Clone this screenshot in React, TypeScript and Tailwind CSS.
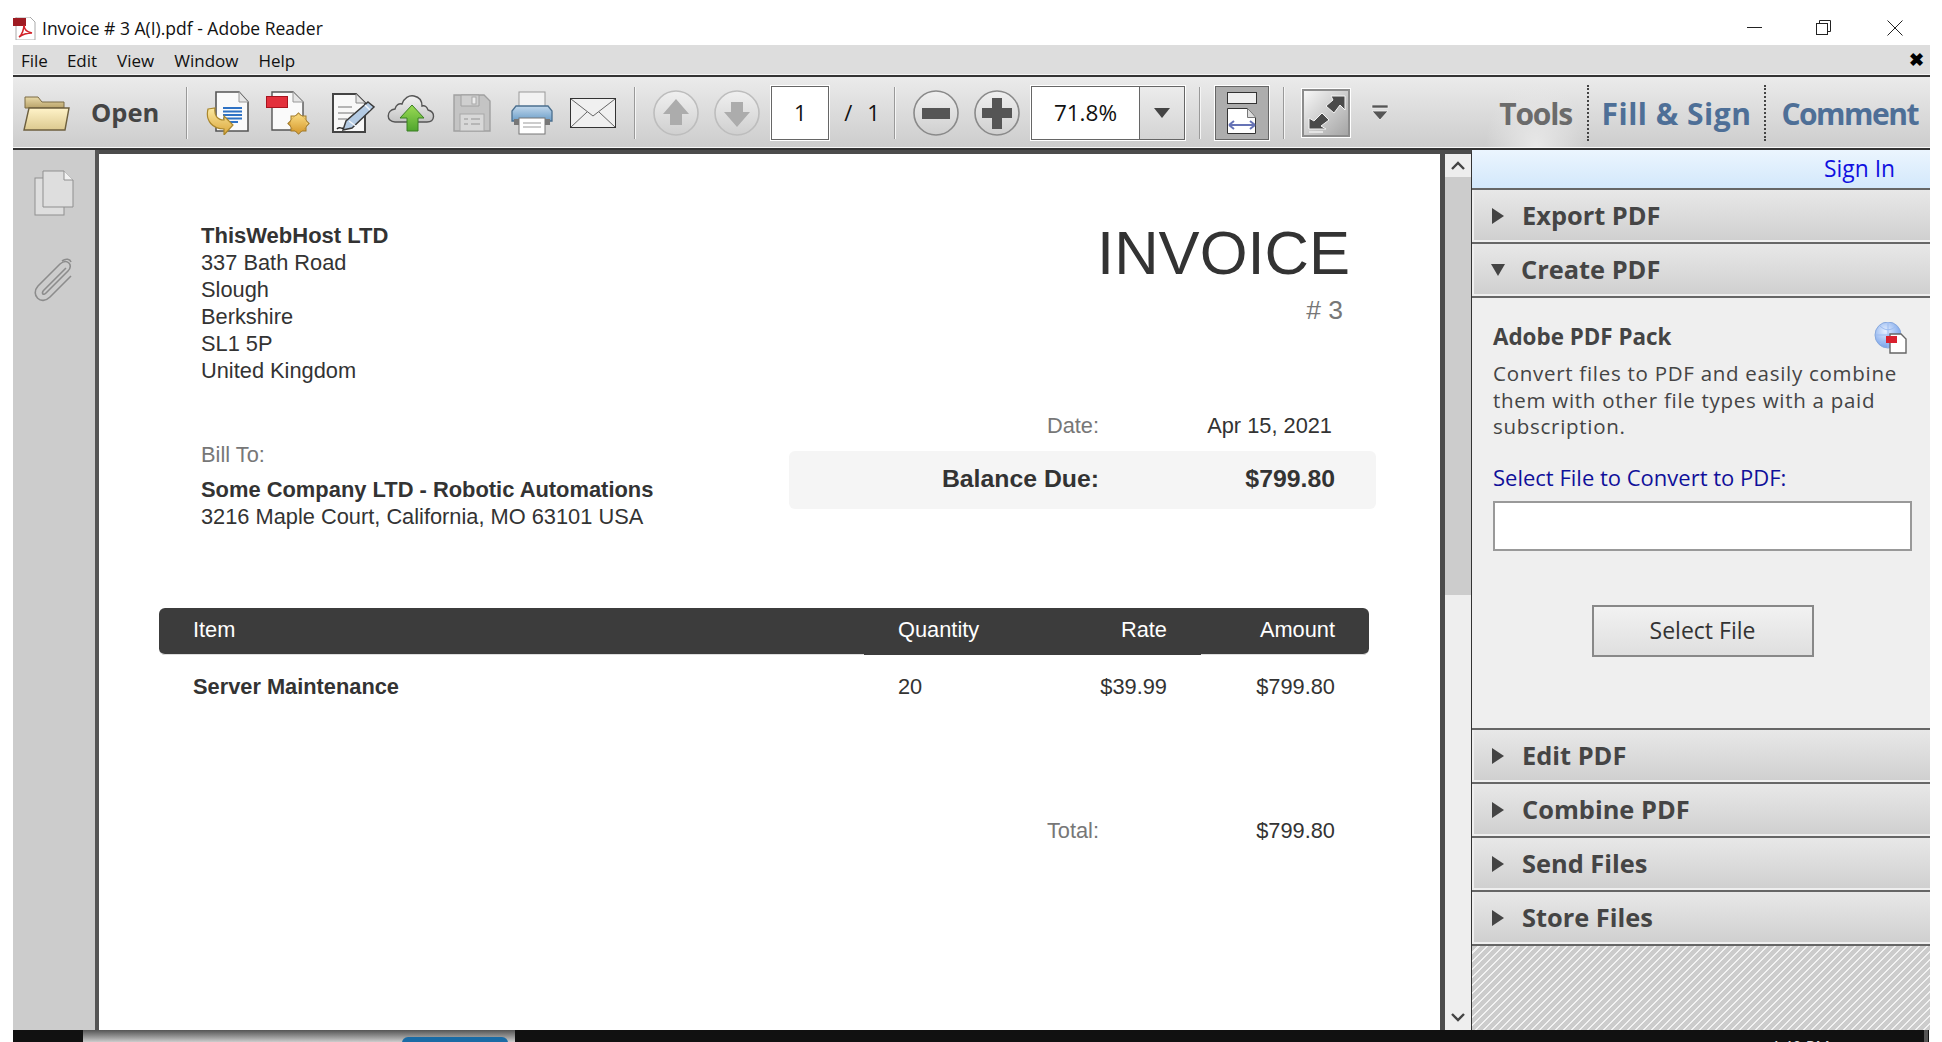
import React from "react";

const ui = "font-['Open_Sans','Noto_Sans',sans-serif]";
const doc = "font-['Liberation_Sans',Arial,sans-serif]";

function Sep({ cls = "" }: { cls?: string }) {
  return <div className={`w-[1px] h-[52px] bg-[#999] border-r border-[#f5f5f5] box-content ${cls}`} />;
}

function Folder() {
  return (
    <svg width="47" height="38" viewBox="0 0 47 38" className="ml-[10px]">
      <defs>
        <linearGradient id="fb" x1="0" y1="0" x2="0" y2="1"><stop offset="0" stopColor="#e8d9a8" /><stop offset="1" stopColor="#b9a36a" /></linearGradient>
        <linearGradient id="ff" x1="0" y1="0" x2="0" y2="1"><stop offset="0" stopColor="#fff3c9" /><stop offset="1" stopColor="#dcc98f" /></linearGradient>
      </defs>
      <path d="M2 3h13l4 5h22v6H2z" fill="url(#fb)" stroke="#7b6b45" />
      <path d="M6 14h40l-4 22H1z" fill="url(#ff)" stroke="#6d5f3e" strokeWidth="1.4" />
    </svg>
  );
}

function DocArrow() {
  return (
    <svg width="44" height="44" viewBox="0 0 44 44">
      <defs><linearGradient id="ya" x1="0" y1="0" x2="0" y2="1"><stop offset="0" stopColor="#fbe9a0" /><stop offset="1" stopColor="#dba63a" /></linearGradient></defs>
      <path d="M11 1h23l9 10v29H11z" fill="#fafafa" stroke="#555" strokeWidth="1.6" />
      <path d="M34 1v10h9" fill="#e6e6e6" stroke="#999" />
      <path d="M18 17h19M18 20.5h19M18 24h19M18 27.5h19M18 31h15" stroke="#2f72c4" strokeWidth="1.8" />
      <path d="M3 18l7-1c-1 7 2 12 9 12v-4l9 9-9 10v-6C8 38 0 30 3 18z" fill="url(#ya)" stroke="#a9862c" strokeWidth="1.2" />
    </svg>
  );
}

function RedDoc() {
  return (
    <svg width="44" height="44" viewBox="0 0 44 44">
      <defs><linearGradient id="gb" x1="0" y1="0" x2="0" y2="1"><stop offset="0" stopColor="#f7d67a" /><stop offset="1" stopColor="#d99f35" /></linearGradient></defs>
      <path d="M6 1h21l10 10v28H6z" fill="#fafafa" stroke="#555" strokeWidth="1.4" />
      <path d="M27 1v10h10" fill="#e6e6e6" stroke="#999" />
      <rect x="0.5" y="5.5" width="21" height="11" fill="#e3303c" stroke="#a8141f" />
      <g transform="translate(32.5 32.5)">
        <rect x="-7.5" y="-7.5" width="15" height="15" fill="url(#gb)" stroke="#a07a2a" />
        <rect x="-7.5" y="-7.5" width="15" height="15" fill="url(#gb)" stroke="#a07a2a" transform="rotate(45)" />
        <circle r="8" fill="url(#gb)" />
      </g>
    </svg>
  );
}

function EditDoc() {
  return (
    <svg width="43" height="40" viewBox="0 0 43 40">
      <path d="M1 1h23l9 9v29H1z" fill="#f8f8f8" stroke="#444" strokeWidth="2" />
      <path d="M24 1v9h9" fill="#e6e6e6" stroke="#888" />
      <path d="M6 14h14M6 20h16M6 26h9" stroke="#b5b5b5" strokeWidth="1.8" />
      <path d="M36 9l6 5-22 21-9 2 3-9z" fill="#b4cbe4" stroke="#3a3a3a" strokeWidth="1.5" />
      <path d="M17 28l8 6M33 12l5 5" stroke="#f2f6fb" strokeWidth="1.5" />
      <path d="M5 36c2-3 4 0 6-1" stroke="#222" strokeWidth="1.4" fill="none" />
    </svg>
  );
}

function Cloud() {
  return (
    <svg width="48" height="38" viewBox="0 0 48 38">
      <defs>
        <linearGradient id="gr" x1="0" y1="0" x2="0" y2="1"><stop offset="0" stopColor="#9bdb55" /><stop offset="1" stopColor="#4fa52d" /></linearGradient>
        <linearGradient id="cl" x1="0" y1="0" x2="0" y2="1"><stop offset="0" stopColor="#f2f2f2" /><stop offset="1" stopColor="#c4c4c4" /></linearGradient>
      </defs>
      <path d="M8 28c-9 0-9-12 0-13 1-4 4-6 7-5 2-6 7-9 12-8 5 1 8 5 8 10 3-1 5 1 6 4 8 2 7 12-1 12z" fill="url(#cl)" stroke="#555" strokeWidth="1.4" />
      <path d="M25 11l12 13h-6v13H20V24h-7z" fill="url(#gr)" stroke="#3a7f24" />
    </svg>
  );
}

function Floppy() {
  return (
    <svg width="38" height="38" viewBox="0 0 38 38">
      <path d="M1 1h30l6 6v30H1z" fill="#c4c4c4" stroke="#a0a0a0" strokeWidth="1.4" />
      <path d="M8 1h18v11H8z" fill="#cfcfcf" stroke="#a0a0a0" />
      <rect x="19" y="3" width="4" height="7" fill="#ececec" stroke="#a8a8a8" />
      <rect x="7" y="20" width="24" height="17" fill="#d8d8d8" stroke="#a8a8a8" />
      <path d="M11 25h4M18 25h9M11 30h4M18 30h9" stroke="#aaa" strokeWidth="1.6" />
    </svg>
  );
}

function Printer() {
  return (
    <svg width="42" height="44" viewBox="0 0 42 44">
      <defs><linearGradient id="pb" x1="0" y1="0" x2="0" y2="1"><stop offset="0" stopColor="#c2d8ec" /><stop offset="1" stopColor="#6a9dc8" /></linearGradient></defs>
      <rect x="8" y="1" width="26" height="17" fill="#f2f2f2" stroke="#999" />
      <path d="M5 15h32l4 5v10H1V20z" fill="url(#pb)" stroke="#4b6f8e" strokeWidth="1.3" />
      <rect x="3" y="28" width="36" height="6" fill="#777" />
      <rect x="8" y="27" width="26" height="16" fill="#fff" stroke="#777" />
      <path d="M12 32h18M12 36h18" stroke="#999" />
    </svg>
  );
}

function Envelope() {
  return (
    <svg width="46" height="30" viewBox="0 0 46 30">
      <rect x="0.5" y="0.5" width="45" height="29" fill="#f0f0f0" stroke="#333" />
      <path d="M1 1l22 17L45 1M1 29l16-15M45 29L29 14" fill="none" stroke="#666" />
    </svg>
  );
}

function RoundBtn({ kind }: { kind: "up" | "down" | "minus" | "plus" }) {
  const on = kind === "minus" || kind === "plus";
  const c = on ? "#555" : "#acacac";
  return (
    <svg width="46" height="46" viewBox="0 0 46 46">
      <defs><linearGradient id={"rb" + kind} x1="0" y1="0" x2="0" y2="1"><stop offset="0" stopColor="#f0f0f0" /><stop offset="1" stopColor="#cfcfcf" /></linearGradient></defs>
      <circle cx="23" cy="23" r="22" fill={`url(#rb${kind})`} stroke={on ? "#8a8a8a" : "#bdbdbd"} strokeWidth="1.6" />
      {kind === "up" && <path d="M23 9l13 15h-7v11H17V24h-7z" fill={c} />}
      {kind === "down" && <path d="M23 37L10 22h7V12h12v10h7z" fill={c} />}
      {kind === "minus" && <rect x="9" y="18" width="28" height="11" fill={c} />}
      {kind === "plus" && <path d="M18 8h10v10h10v10H28v11H18V28H8V18h10z" fill={c} />}
    </svg>
  );
}

function Head({ label, open }: { label: string; open?: boolean }) {
  return (
    <div className="border-t-2 border-[#666] h-[54px] pl-[2px] bg-[#efefef] shrink-0">
      <div className="h-[50px] pt-[2px] bg-gradient-to-b from-[#e8e8e8] to-[#d0d0d0] flex items-center">
        {open ? (
          <svg width="14" height="12" viewBox="0 0 14 12" className="ml-[17px] mr-[16px]"><path d="M0 0h14L7 12z" fill="#444" /></svg>
        ) : (
          <svg width="12" height="16" viewBox="0 0 12 16" className="ml-[18px] mr-[18px]"><path d="M0 0l12 8-12 8z" fill="#444" /></svg>
        )}
        <span className={`${ui} font-bold text-[25.4px] leading-none text-[#454545]`}>{label}</span>
      </div>
    </div>
  );
}

export default function App() {
  return (
    <div className={`w-[1942px] h-[1042px] bg-white flex flex-col overflow-hidden ${doc}`}>
      {/* title bar */}
      <div className="h-[45px] flex items-center pl-[13px] relative shrink-0">
        <div className="flex items-center pt-[12px]">
          <svg width="23" height="23" viewBox="0 0 23 23">
            <path d="M3 0h14l5 5v18H3z" fill="#fff" stroke="#aaa" />
            <rect x="0" y="1" width="13" height="8" fill="#9e1b22" />
            <path d="M6 20c3-2 5-8 5-12 0 4 3 7 8 8-4 0-9 1-13 4z" fill="none" stroke="#d2232a" strokeWidth="1.6" />
          </svg>
          <span className={`${ui} text-[17.5px] ml-[6px] text-[#111]`}>Invoice # 3 A(I).pdf - Adobe Reader</span>
        </div>
        <div className="ml-auto flex items-center pr-[39px] pt-[10px]">
          <div className="w-[15px] h-[1px] bg-[#222]" />
          <svg width="15" height="15" viewBox="0 0 15 15" fill="none" stroke="#222" className="ml-[54px]"><rect x="0.5" y="3.5" width="11" height="11" /><path d="M3.5 3.5v-3h11v11h-3" /></svg>
          <svg width="16" height="16" viewBox="0 0 16 16" fill="none" stroke="#222" className="ml-[56px]"><path d="M0.5 0.5l15 15M15.5 0.5l-15 15" /></svg>
        </div>
      </div>

      <div className="flex-1 ml-[13px] w-[1917px] flex flex-col min-h-0">
        {/* menu */}
        <div className="h-[30px] bg-[#dddddd] border-b border-[#f4f4f4] flex items-center pl-[8px] shrink-0 text-[#111]">
          <div className={`${ui} text-[17px] flex gap-[20px] pt-[2px]`}>
            <span>File</span><span className="-ml-[1px]">Edit</span><span>View</span><span>Window</span><span>Help</span>
          </div>
          <span className="ml-auto mr-[6px] text-[18px] font-bold leading-none text-black">✖</span>
        </div>
        <div className="h-[2px] bg-[#333] shrink-0" />

        {/* toolbar */}
        <div className="h-[71px] pt-[1px] bg-gradient-to-b from-[#ebebeb] to-[#cdcdcd] border-b border-[#f7f7f7] flex items-center shrink-0 relative">
          <Folder />
          <span className={`${ui} font-bold text-[25.5px] text-[#444] ml-[21px] mr-[27px] leading-none`}>Open</span>
          <Sep />
          <div className="ml-[17px]"><DocArrow /></div>
          <div className="ml-[17px]"><RedDoc /></div>
          <div className="ml-[22px]"><EditDoc /></div>
          <div className="ml-[12px]"><Cloud /></div>
          <div className="ml-[18px]"><Floppy /></div>
          <div className="ml-[20px]"><Printer /></div>
          <div className="ml-[17px]"><Envelope /></div>
          <Sep cls="ml-[18px]" />
          <div className="ml-[17px]"><RoundBtn kind="up" /></div>
          <div className="ml-[15px]"><RoundBtn kind="down" /></div>
          <div className="ml-[11px] w-[58px] h-[54px] bg-white border border-[#666] outline outline-1 outline-white flex items-center justify-center">
            <span className={`${ui} text-[22px] text-[#111]`}>1</span>
          </div>
          <span className={`${ui} text-[22px] ml-[15px] text-[#111]`}>/</span>
          <span className={`${ui} text-[22px] ml-[15px] text-[#111]`}>1</span>
          <Sep cls="ml-[14px]" />
          <div className="ml-[17px]"><RoundBtn kind="minus" /></div>
          <div className="ml-[15px]"><RoundBtn kind="plus" /></div>
          <div className="ml-[11px] w-[154px] h-[54px] bg-white border border-[#666] outline outline-1 outline-white flex">
            <div className={`${ui} w-[107px] flex items-center justify-center text-[22.5px] text-[#111]`}>71.8%</div>
            <div className="flex-1 border-l border-[#666] bg-gradient-to-b from-[#ececec] to-[#d4d4d4] flex items-center justify-center">
              <svg width="16" height="10" viewBox="0 0 16 10"><path d="M0 0h16L8 10z" fill="#444" /></svg>
            </div>
          </div>
          <Sep cls="ml-[14px]" />
          <div className="ml-[14px] w-[54px] h-[54px] bg-[#adadad] border border-[#666] outline outline-1 outline-white flex items-center justify-center">
            <svg width="32" height="44" viewBox="0 0 32 44">
              <rect x="1.5" y="1.5" width="29" height="11" fill="#efefef" stroke="#333" />
              <path d="M1.5 17.5h20l8 9v16h-28z" fill="#fff" stroke="#333" />
              <path d="M21.5 17.5v9h8" fill="#ddd" stroke="#777" />
              <path d="M3 34h26M3 34l5-4M3 34l5 4M29 34l-5-4M29 34l-5 4" stroke="#6673b5" strokeWidth="2" fill="none" />
            </svg>
          </div>
          <Sep cls="ml-[14px]" />
          <div className="ml-[17px] w-[48px] h-[48px] bg-gradient-to-br from-[#f7f7f7] to-[#a5a5a5] border-2 border-[#8c8c8c] outline outline-1 outline-white flex items-center justify-center">
            <svg width="44" height="44" viewBox="0 0 44 44">
              <path d="M27 5h14v14l-5-5-6 8-8-7 7-6z" fill="#4a4a4a" stroke="#f4f4f4" />
              <path d="M5 27l5 3 8-8 7 7-8 6 5 3H5z" fill="#4a4a4a" stroke="#f4f4f4" />
              <rect x="5" y="40" width="14" height="2" fill="#e4e4e4" />
            </svg>
          </div>
          <svg width="18" height="16" viewBox="0 0 18 16" className="ml-[21px]">
            <rect x="1" y="0" width="16" height="3" fill="#555" stroke="#f4f4f4" strokeWidth="0.6" />
            <path d="M1 6h16l-8 9z" fill="#555" stroke="#f4f4f4" strokeWidth="0.8" />
          </svg>
          <div className="ml-auto h-full flex items-center">
            <div className="w-[102px] h-full bg-[radial-gradient(ellipse_at_50%_100%,#e8e8e8,transparent_70%)] flex items-center justify-center">
              <span className={`${ui} font-bold text-[30px] text-[#6b6b6b] leading-none tracking-[-1.2px] pt-[3px]`}>Tools</span>
            </div>
            <div className="w-0 h-[56px] border-l-2 border-dotted border-[#444]" />
            <span className={`${ui} font-bold text-[30px] text-[#4e6f97] leading-none tracking-[0.5px] ml-[13px] mr-[13px] pt-[3px]`}>Fill &amp; Sign</span>
            <div className="w-0 h-[56px] border-l-2 border-dotted border-[#444]" />
            <span className={`${ui} font-bold text-[30px] text-[#4e6f97] leading-none tracking-[-1.5px] ml-[15px] mr-[12px] pt-[3px]`}>Comment</span>
          </div>
        </div>

        {/* body */}
        <div className="flex-1 min-h-0 border-t-2 border-[#333] flex">
          <div className="w-[82px] shrink-0 bg-[#cccccc] flex flex-col items-center pt-[20px]">
            <svg width="40" height="46" viewBox="0 0 40 46" fill="#dedede" stroke="#8f8f8f">
              <rect x="1" y="8" width="29" height="37" />
              <path d="M9 1h21l9 9v27H9z" />
              <path d="M30 1v9h9" fill="#f2f2f2" />
            </svg>
            <svg width="42" height="46" viewBox="0 0 42 46" fill="none" stroke="#8c8c8c" strokeWidth="1.6" className="mt-[41px]">
              <path d="M33 11L11 33c-3 3-1 6 2 3l22-22c6-6-1-13-8-7L5 29c-8 9 3 20 12 11l21-21" />
              <path d="M38 5c-1-3-5-4-9-1" />
            </svg>
          </div>
          <div className="w-[4px] bg-[#555] shrink-0" />

          {/* page */}
          <div className="w-[1341px] shrink-0 bg-white border-t-4 border-[#4c4c4c] text-[21.8px] leading-[27px] text-[#333]">
            <div className="flex justify-between pl-[102px] pr-[90px] pt-[68px]">
              <div>
                <div className="font-bold text-[22px]">ThisWebHost LTD</div>
                <div>337 Bath Road</div>
                <div>Slough</div>
                <div>Berkshire</div>
                <div>SL1 5P</div>
                <div>United Kingdom</div>
              </div>
              <div className="text-right -mt-[2px]">
                <div className="text-[61.5px] leading-[66px] text-[#333]">INVOICE</div>
                <div className="text-[26.5px] leading-[30px] text-[#777] pr-[7px] mt-[9px]">#&nbsp;3</div>
              </div>
            </div>

            <div className="flex mt-[28px] h-[118px]">
              <div className="w-[690px] pl-[102px] pt-[29px]">
                <div className="text-[#777]">Bill To:</div>
                <div className="font-bold text-[21.9px] mt-[8px]">Some Company LTD - Robotic Automations</div>
                <div>3216 Maple Court, California, MO 63101 USA</div>
              </div>
              <div className="w-[587px]">
                <div className="flex h-[27px]">
                  <div className="w-[310px] text-right text-[#777]">Date:</div>
                  <div className="w-[233px] text-right">Apr 15, 2021</div>
                </div>
                <div className="mt-[12px] h-[58px] pb-[3px] bg-[#f5f5f5] rounded-[6px] flex items-center text-[24.8px] font-bold">
                  <div className="w-[310px] text-right">Balance Due:</div>
                  <div className="w-[236px] text-right">$799.80</div>
                </div>
              </div>
            </div>

            <div className="ml-[60px] w-[1210px] mt-[78px]">
              <div className="relative h-[47px] pb-[3px] bg-[#3c3c3c] rounded-[6px] border-b border-[#ddd] text-white grid grid-cols-[739px_150px_119px_168px] items-center">
                <div className="pl-[34px]">Item</div>
                <div>Quantity</div>
                <div className="text-right">Rate</div>
                <div className="text-right">Amount</div>
                <div className="absolute left-[705px] w-[337px] -bottom-[1px] h-[2px] bg-[#3c3c3c]" />
              </div>
              <div className="grid grid-cols-[739px_150px_119px_168px] mt-[18px]">
                <div className="pl-[34px] font-bold">Server Maintenance</div>
                <div>20</div>
                <div className="text-right">$39.99</div>
                <div className="text-right">$799.80</div>
              </div>
              <div className="grid grid-cols-[940px_68px_168px] mt-[117px]">
                <div className="text-right text-[#777]">Total:</div>
                <div />
                <div className="text-right">$799.80</div>
              </div>
            </div>
          </div>
          <div className="w-[5px] bg-[#4c4c4c] shrink-0" />

          {/* scrollbar */}
          <div className="w-[27px] shrink-0 bg-[#eeeeee] flex flex-col items-center border-r border-[#333] border-t-4 border-t-[#4c4c4c]">
            <svg width="14" height="9" viewBox="0 0 14 9" className="mt-[7px]" fill="none" stroke="#444" strokeWidth="2.4"><path d="M1 8l6-6 6 6" /></svg>
            <div className="w-full h-[418px] bg-[#cccccc] mt-[7px]" />
            <svg width="14" height="9" viewBox="0 0 14 9" className="mt-auto mb-[8px]" fill="none" stroke="#444" strokeWidth="2.4"><path d="M1 1l6 6 6-6" /></svg>
          </div>

          {/* side panel */}
          <div className="flex-1 flex flex-col bg-[#efefef] min-w-0">
            <div className="h-[38px] bg-gradient-to-b from-[#ebf5fe] to-[#d3e8fb] flex items-center justify-end pr-[35px] shrink-0">
              <span className={`${ui} text-[22.8px] text-[#1010e0] leading-none`}>Sign In</span>
            </div>
            <Head label="Export PDF" />
            <Head label="Create PDF" open />
            <div className="border-t-2 border-[#666] h-[432px] pl-[21px] pr-[17px] shrink-0 relative">
              <div className="flex items-center justify-between pt-[25px]">
                <span className={`${ui} font-bold text-[22.4px] leading-[28px] text-[#444]`}>Adobe PDF Pack</span>
                <svg width="33" height="32" viewBox="0 0 33 32" className="absolute left-[402px] top-[24px]">
                  <defs><radialGradient id="gl" cx="0.4" cy="0.35" r="0.7"><stop offset="0" stopColor="#e6f0ff" /><stop offset="1" stopColor="#6d9be8" /></radialGradient></defs>
                  <circle cx="14" cy="13" r="13" fill="url(#gl)" stroke="#88a8dc" />
                  <path d="M2 13h24M14 0v26M6 4c5 5 11 5 16 0M6 22c5-5 11-5 16 0" stroke="#9dbcf0" fill="none" />
                  <path d="M16 12h11l5 5v14H16z" fill="#fff" stroke="#666" strokeWidth="1.4" />
                  <rect x="12" y="14" width="11" height="7" fill="#d9202e" />
                </svg>
              </div>
              <p className={`${ui} text-[20.5px] leading-[26.5px] text-[#444] tracking-[0.72px] mt-[9px] whitespace-nowrap`}>
                Convert files to PDF and easily combine<br />them with other file types with a paid<br />subscription.
              </p>
              <div className={`${ui} text-[22px] leading-[26px] text-[#10109a] mt-[24px]`}>Select File to Convert to PDF:</div>
              <div className="mt-[11px] h-[50px] w-[419px] bg-white border-2 border-[#999]" />
              <div className="flex justify-center mt-[54px] w-[419px]">
                <div className={`${ui} w-[222px] h-[52px] border-2 border-[#888] bg-gradient-to-b from-[#f2f2f2] to-[#dfdfdf] flex items-center justify-center text-[23px] text-[#333]`}>Select File</div>
              </div>
            </div>
            <Head label="Edit PDF" />
            <Head label="Combine PDF" />
            <Head label="Send Files" />
            <Head label="Store Files" />
            <div className="flex-1 border-t-2 border-[#666] bg-[repeating-linear-gradient(135deg,#cccccc_0,#cccccc_4.24px,#f2f2f2_4.24px,#f2f2f2_5.66px)]" />
          </div>
        </div>
      </div>

      {/* taskbar peeking at the bottom */}
      <div className="h-[12px] ml-[13px] w-[1916px] bg-[#111] shrink-0 flex overflow-hidden">
        <div className="ml-[70px] w-[432px] h-full bg-gradient-to-b from-[#555] to-[#ccc] pl-[319px] pt-[7px]">
          <div className="w-[106px] h-[12px] rounded-t-[6px] bg-[#1a6ba5]" />
        </div>
        <span className={`${ui} ml-[1255px] text-[16px] leading-[20px] pt-[7px] text-[#ddd] whitespace-nowrap`}>4:40 PM</span>
        <div className="ml-auto mr-[1px] w-[4px] h-full bg-[#555]" />
      </div>
    </div>
  );
}
